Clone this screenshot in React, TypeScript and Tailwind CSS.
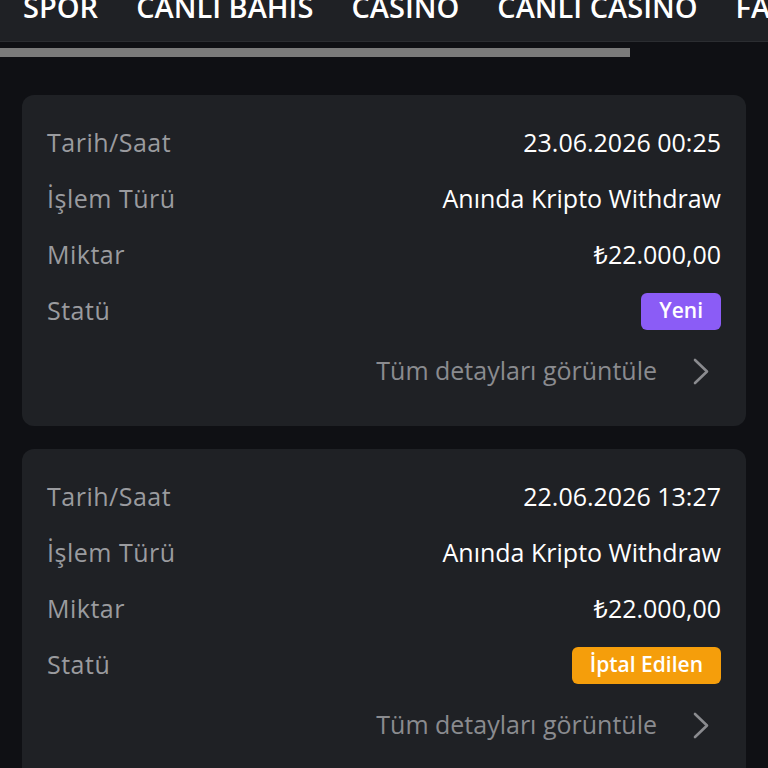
type Tx = {
  date: string;
  type: string;
  amount: string;
  status: string;
  statusClass: string;
};

const items: Tx[] = [
  {
    date: "23.06.2026 00:25",
    type: "Anında Kripto Withdraw",
    amount: "₺22.000,00",
    status: "Yeni",
    statusClass: "bg-[#8b5cf6]",
  },
  {
    date: "22.06.2026 13:27",
    type: "Anında Kripto Withdraw",
    amount: "₺22.000,00",
    status: "İptal Edilen",
    statusClass: "bg-[#f59e0b]",
  },
];

function Row({ label, children }: { label: string; children: React.ReactNode }) {
  return (
    <div className="flex h-14 items-center justify-between">
      <span className="tracking-[0.02em] text-[#9a9b9f]">{label}</span>
      {children}
    </div>
  );
}

function TxCard({ tx }: { tx: Tx }) {
  return (
    <div className="rounded-xl bg-[#1f2125] px-[25px] pb-[27px] pt-5">
      <Row label="Tarih/Saat">
        <span className="text-white">{tx.date}</span>
      </Row>
      <Row label="İşlem Türü">
        <span className="text-white">{tx.type}</span>
      </Row>
      <Row label="Miktar">
        <span className="text-white">{tx.amount}</span>
      </Row>
      <Row label="Statü">
        <span
          className={`flex h-[37px] items-center rounded-md px-[18px] text-[21px] font-semibold text-white ${tx.statusClass}`}
        >
          {tx.status}
        </span>
      </Row>
      <div className="mt-1 flex h-14 items-center justify-end gap-9 text-[#8a8b8f]">
        <span>Tüm detayları görüntüle</span>
        {/* chevron */}
        <svg width="16" height="27" viewBox="0 0 16 27" fill="none" className="mr-3">
          <path d="M2 2 L14 13.5 L2 25" stroke="#8a8b8f" strokeWidth="2.6" strokeLinecap="round" strokeLinejoin="round" />
        </svg>
      </div>
    </div>
  );
}

export default function App() {
  return (
    <div
      className="min-h-screen overflow-hidden bg-[#0f1014] text-[25px]"
      style={{ fontFamily: "'Open Sans', 'Noto Sans', sans-serif" }}
    >
      {/* top menu, scrolled */}
      <div className="h-[42px] overflow-hidden border-b border-[#2b2d31] bg-[#1f2125]">
        <div className="-mt-[15px] flex gap-[38px] whitespace-nowrap pl-[23px] text-[29px] font-semibold uppercase text-white">
          <span>Spor</span>
          <span>Canlı Bahis</span>
          <span>Casino</span>
          <span>Canlı Casino</span>
          <span>Fast Games</span>
        </div>
      </div>
      <div className="mt-[6px] h-[9px] w-[630px] bg-[#7b7b7b]" />

      <div className="flex flex-col gap-[23px] px-[22px] pt-[38px]">
        {items.map((tx) => (
          <TxCard key={tx.date} tx={tx} />
        ))}
      </div>
    </div>
  );
}
